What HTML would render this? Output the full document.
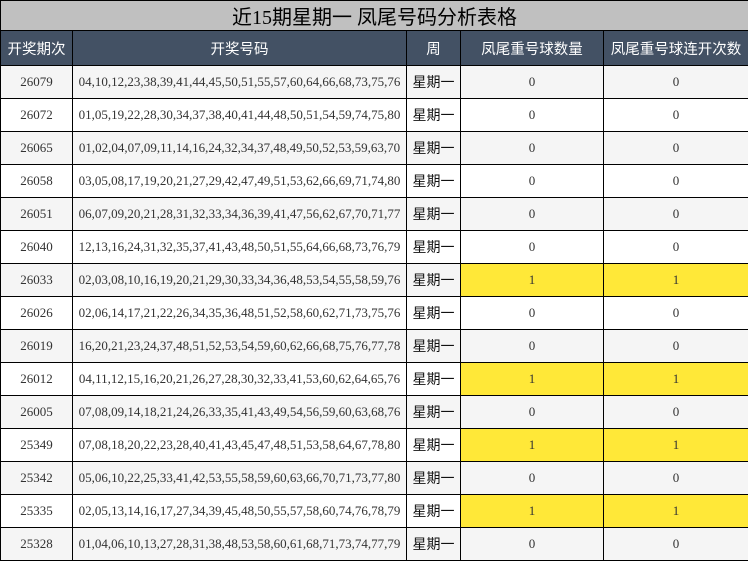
<!DOCTYPE html>
<html><head><meta charset="utf-8"><style>
body{margin:0;width:748px;height:560px;overflow:hidden;background:#fff;font-family:"Liberation Serif","Noto Serif CJK SC",serif;}
table{border-collapse:collapse;width:748px;table-layout:fixed;}
td,th{border:1px solid #000;text-align:center;padding:0;font-size:13px;color:#333;}
.t{height:28px;background:#c0c0c0;font-size:20px;color:#000;font-weight:normal;font-family:"Liberation Serif","Noto Sans CJK SC",serif;}
.h th{height:34px;background:#435164;color:#fff;font-weight:normal;font-size:14.5px;font-family:"Liberation Sans","Noto Sans CJK SC",sans-serif;}
tr.r td{height:32px;}
tr.r:nth-child(odd) td{background:#f5f5f5;}
tr.r:nth-child(even) td{background:#fff;}
td.w{font-family:"Liberation Sans","Noto Sans CJK SC",sans-serif;font-size:14px;color:#111;}
tr.r td.y{background:#ffe838 !important;}
</style></head><body>
<table>
<colgroup><col style="width:72px"><col style="width:334px"><col style="width:54px"><col style="width:143px"><col style="width:145px"></colgroup>
<tr><th class="t" colspan="5">近15期星期一 凤尾号码分析表格</th></tr>
<tr class="h"><th>开奖期次</th><th>开奖号码</th><th>周</th><th>凤尾重号球数量</th><th>凤尾重号球连开次数</th></tr>
<tr class="r"><td>26079</td><td>04,10,12,23,38,39,41,44,45,50,51,55,57,60,64,66,68,73,75,76</td><td class="w">星期一</td><td>0</td><td>0</td></tr>
<tr class="r"><td>26072</td><td>01,05,19,22,28,30,34,37,38,40,41,44,48,50,51,54,59,74,75,80</td><td class="w">星期一</td><td>0</td><td>0</td></tr>
<tr class="r"><td>26065</td><td>01,02,04,07,09,11,14,16,24,32,34,37,48,49,50,52,53,59,63,70</td><td class="w">星期一</td><td>0</td><td>0</td></tr>
<tr class="r"><td>26058</td><td>03,05,08,17,19,20,21,27,29,42,47,49,51,53,62,66,69,71,74,80</td><td class="w">星期一</td><td>0</td><td>0</td></tr>
<tr class="r"><td>26051</td><td>06,07,09,20,21,28,31,32,33,34,36,39,41,47,56,62,67,70,71,77</td><td class="w">星期一</td><td>0</td><td>0</td></tr>
<tr class="r"><td>26040</td><td>12,13,16,24,31,32,35,37,41,43,48,50,51,55,64,66,68,73,76,79</td><td class="w">星期一</td><td>0</td><td>0</td></tr>
<tr class="r"><td>26033</td><td>02,03,08,10,16,19,20,21,29,30,33,34,36,48,53,54,55,58,59,76</td><td class="w">星期一</td><td class="y">1</td><td class="y">1</td></tr>
<tr class="r"><td>26026</td><td>02,06,14,17,21,22,26,34,35,36,48,51,52,58,60,62,71,73,75,76</td><td class="w">星期一</td><td>0</td><td>0</td></tr>
<tr class="r"><td>26019</td><td>16,20,21,23,24,37,48,51,52,53,54,59,60,62,66,68,75,76,77,78</td><td class="w">星期一</td><td>0</td><td>0</td></tr>
<tr class="r"><td>26012</td><td>04,11,12,15,16,20,21,26,27,28,30,32,33,41,53,60,62,64,65,76</td><td class="w">星期一</td><td class="y">1</td><td class="y">1</td></tr>
<tr class="r"><td>26005</td><td>07,08,09,14,18,21,24,26,33,35,41,43,49,54,56,59,60,63,68,76</td><td class="w">星期一</td><td>0</td><td>0</td></tr>
<tr class="r"><td>25349</td><td>07,08,18,20,22,23,28,40,41,43,45,47,48,51,53,58,64,67,78,80</td><td class="w">星期一</td><td class="y">1</td><td class="y">1</td></tr>
<tr class="r"><td>25342</td><td>05,06,10,22,25,33,41,42,53,55,58,59,60,63,66,70,71,73,77,80</td><td class="w">星期一</td><td>0</td><td>0</td></tr>
<tr class="r"><td>25335</td><td>02,05,13,14,16,17,27,34,39,45,48,50,55,57,58,60,74,76,78,79</td><td class="w">星期一</td><td class="y">1</td><td class="y">1</td></tr>
<tr class="r"><td>25328</td><td>01,04,06,10,13,27,28,31,38,48,53,58,60,61,68,71,73,74,77,79</td><td class="w">星期一</td><td>0</td><td>0</td></tr>
</table>
</body></html>
